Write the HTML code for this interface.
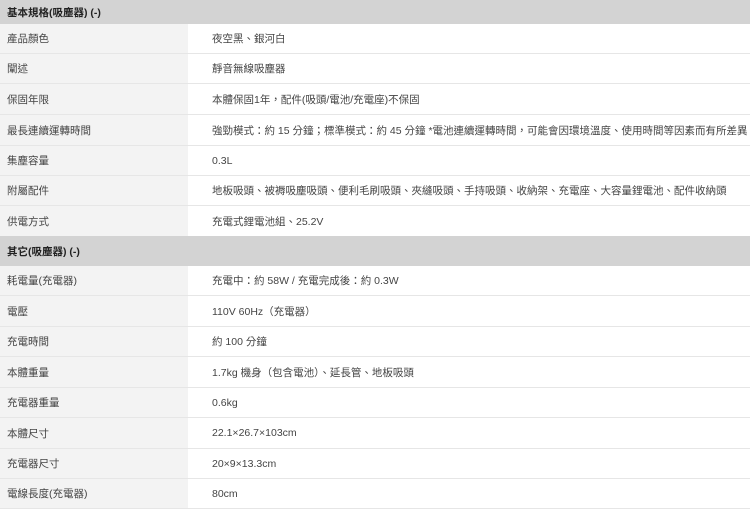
<!DOCTYPE html>
<html><head><meta charset="utf-8"><style>
body{margin:0;width:750px;height:502px;overflow:hidden;background:#fff;font-family:"Liberation Sans","Noto Sans CJK TC",sans-serif;font-size:10.5px;color:#444}
.h{background:#d3d3d3;font-weight:bold;color:#222;padding-left:7px;box-sizing:border-box;display:flex;align-items:center}
.r{display:flex;height:30px;box-sizing:border-box;border-bottom:1px solid #e6e6e6}
.l{width:188px;background:#f3f3f3;padding-left:7px;box-sizing:border-box;display:flex;align-items:center}
.v{flex:1;padding-left:24px;display:flex;align-items:center;white-space:nowrap;overflow:hidden}
</style></head><body>
<div class="h" style="height:24px">基本規格(吸塵器) (-)</div>
<div class="r"><div class="l">產品顏色</div><div class="v">夜空黑、銀河白</div></div>
<div class="r"><div class="l">闡述</div><div class="v">靜音無線吸塵器</div></div>
<div class="r" style="height:31px"><div class="l">保固年限</div><div class="v">本體保固1年，配件(吸頭/電池/充電座)不保固</div></div>
<div class="r" style="height:31px"><div class="l">最長連續運轉時間</div><div class="v">強勁模式：約 15 分鐘；標準模式：約 45 分鐘 *電池連續運轉時間，可能會因環境溫度、使用時間等因素而有所差異</div></div>
<div class="r"><div class="l">集塵容量</div><div class="v">0.3L</div></div>
<div class="r"><div class="l">附屬配件</div><div class="v">地板吸頭、被褥吸塵吸頭、便利毛刷吸頭、夾縫吸頭、手持吸頭、收納架、充電座、大容量鋰電池、配件收納頭</div></div>
<div class="r" style="height:30px;border:none"><div class="l">供電方式</div><div class="v">充電式鋰電池組、25.2V</div></div>
<div class="h" style="height:30px">其它(吸塵器) (-)</div>
<div class="r"><div class="l">耗電量(充電器)</div><div class="v">充電中：約 58W / 充電完成後：約 0.3W</div></div>
<div class="r" style="height:31px"><div class="l">電壓</div><div class="v">110V 60Hz（充電器）</div></div>
<div class="r"><div class="l">充電時間</div><div class="v">約 100 分鐘</div></div>
<div class="r" style="height:31px"><div class="l">本體重量</div><div class="v">1.7kg 機身（包含電池）、延長管、地板吸頭</div></div>
<div class="r"><div class="l">充電器重量</div><div class="v">0.6kg</div></div>
<div class="r" style="height:31px"><div class="l">本體尺寸</div><div class="v">22.1×26.7×103cm</div></div>
<div class="r"><div class="l">充電器尺寸</div><div class="v">20×9×13.3cm</div></div>
<div class="r"><div class="l">電線長度(充電器)</div><div class="v">80cm</div></div>
</body></html>
